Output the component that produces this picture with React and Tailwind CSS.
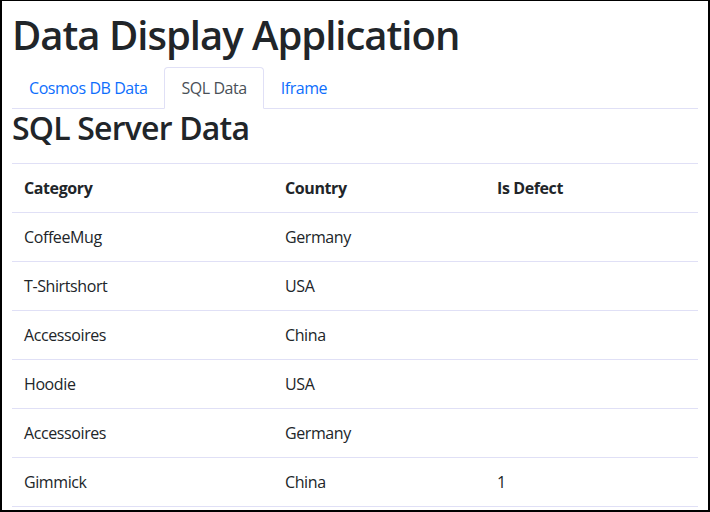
import React, { useState } from 'react';

const rows = [
  { category: 'CoffeeMug', country: 'Germany', isDefect: '' },
  { category: 'T-Shirtshort', country: 'USA', isDefect: '' },
  { category: 'Accessoires', country: 'China', isDefect: '' },
  { category: 'Hoodie', country: 'USA', isDefect: '' },
  { category: 'Accessoires', country: 'Germany', isDefect: '' },
  { category: 'Gimmick', country: 'China', isDefect: '1' },
];

const tabs = ['Cosmos DB Data', 'SQL Data', 'Iframe'];

export default function App() {
  const [active, setActive] = useState('SQL Data');

  return (
    <div
      className="h-[512px] overflow-hidden border-t border-l-2 border-r-2 border-b-2 border-black bg-white text-[#212529]"
      style={{ fontFamily: '"Open Sans", "Noto Sans", sans-serif' }}
    >
      <div className="px-[10px] pt-[10px]">
        <h1 className="mb-2 text-[40px] font-semibold leading-[48px] tracking-[-1px]">Data Display Application</h1>

        {/* Tabs */}
        <ul className="flex border-b border-[#e0e0f6]">
          {tabs.map((t) => (
            <li key={t} className="-mb-px">
              <button
                onClick={() => setActive(t)}
                className={
                  t === active
                    ? 'block rounded-t border border-[#e0e0f6] border-b-white bg-white px-4 py-2 text-base leading-6 tracking-[-0.45px] text-[#495057]'
                    : 'block border border-transparent px-4 py-2 text-base leading-6 tracking-[-0.45px] text-[#0d6efd]'
                }
              >
                {t}
              </button>
            </li>
          ))}
        </ul>

        <h2 className="mb-4 text-[32px] font-semibold leading-[38px] tracking-[-0.8px]">SQL Server Data</h2>

        <table className="w-full border-collapse border-t border-[#e0e0f6] text-base leading-6 tracking-[-0.4px]">
          <thead>
            <tr className="border-b border-[#e0e0f6]">
              <th className="w-[261px] px-3 py-3 text-left font-bold">Category</th>
              <th className="w-[212px] px-3 py-3 text-left font-bold">Country</th>
              <th className="px-3 py-3 text-left font-bold">Is Defect</th>
            </tr>
          </thead>
          <tbody>
            {rows.map((r, i) => (
              <tr key={i} className="border-b border-[#e0e0f6]">
                <td className="px-3 py-3">{r.category}</td>
                <td className="px-3 py-3">{r.country}</td>
                <td className="px-3 py-3">{r.isDefect}</td>
              </tr>
            ))}
          </tbody>
        </table>
      </div>
    </div>
  );
}
